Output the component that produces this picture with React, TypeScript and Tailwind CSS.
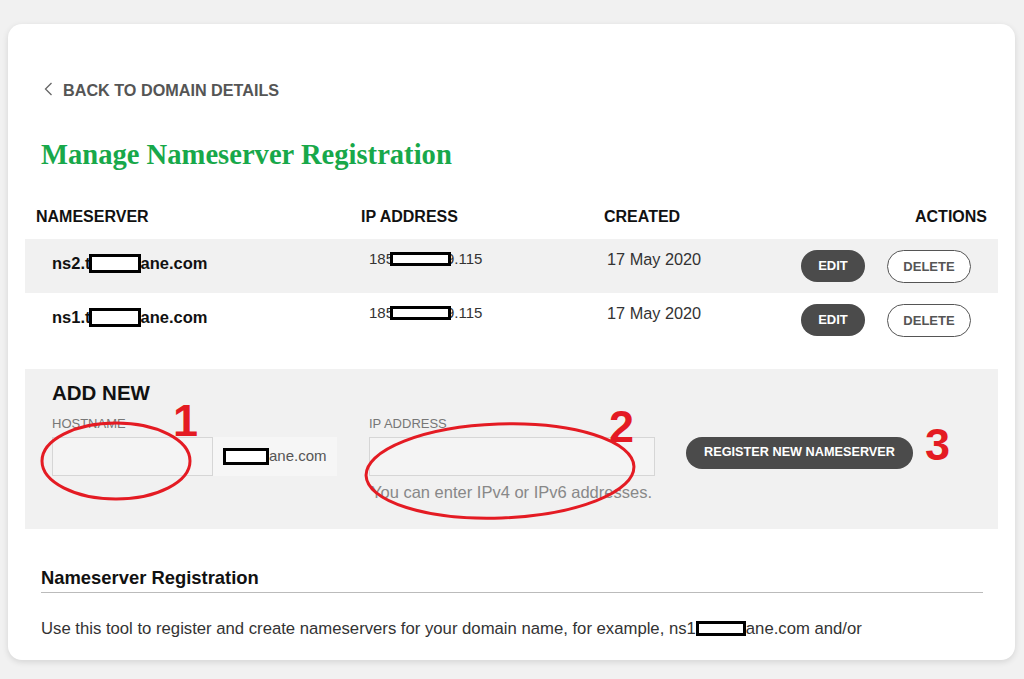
import React from "react";

const Redact = ({ w, h, cls = "" }: { w: number; h: number; cls?: string }) => (
  <span
    className={`relative z-10 inline-block border-[3px] border-black bg-white align-middle ${cls}`}
    style={{ width: w, height: h }}
  />
);

function Row({ ns, shaded }: { ns: string; shaded: boolean }) {
  return (
    <div className={`flex h-[54px] pl-[27px] pr-[27px] ${shaded ? "bg-[#f1f1f1]" : "bg-white"}`}>
      <div className="w-[317px] pt-[14px] text-[16.5px] leading-[20px] font-bold text-[#111]">
        {ns}
        <Redact w={52} h={19} cls="-ml-[2px] -mt-[2px]" />
        ane.com
      </div>
      <div className="w-[238px] pt-[10px] text-[15px] leading-[20px] text-[#333]">
        <span className="-mr-[4px]">185</span>
        <Redact w={61} h={14} cls="-mt-[3px]" />
        <span className="-ml-[5px]">9.115</span>
      </div>
      <div className="flex-1 pt-[10px] text-[16.3px] leading-[20px] text-[#333]">17 May 2020</div>
      <div className="flex gap-[22px] pt-[11px]">
        <button className="h-[32px] w-[64px] rounded-full bg-[#4b4b4b] text-[13px] font-bold text-white">EDIT</button>
        <button className="h-[33px] w-[84px] rounded-full border border-[#555] bg-white text-[13px] font-bold text-[#555]">
          DELETE
        </button>
      </div>
    </div>
  );
}

export default function App() {
  return (
    <div
      className="relative min-h-screen bg-[#f1f1f1] pl-2 pt-6"
      style={{ fontFamily: '"Liberation Sans", Arial, sans-serif' }}
    >
      <div className="h-[636px] w-[1007px] overflow-hidden rounded-[14px] bg-white px-[17px] pt-[56px] shadow-[0_2px_6px_rgba(0,0,0,0.12)]">
        {/* back link */}
        <div className="ml-[19px] flex h-[20px] items-center gap-[10px] text-[16.2px] font-bold leading-[20px] text-[#555]">
          <svg width="9" height="14" viewBox="0 0 9 14" className="-mt-[2px]">
            <polyline points="7.5,1 1.5,7 7.5,13" fill="none" stroke="#666" strokeWidth="1.3" />
          </svg>
          <span>BACK TO DOMAIN DETAILS</span>
        </div>

        {/* title */}
        <h1
          className="ml-[16px] mt-[38px] text-[28.6px] font-bold leading-[34px] text-[#18a84a]"
          style={{ fontFamily: '"Liberation Serif", "Times New Roman", serif' }}
        >
          Manage Nameserver Registration
        </h1>

        {/* header */}
        <div className="mt-[35px] flex pl-[11px] pr-[11px] text-[16px] font-bold leading-[20px] text-[#111]">
          <div className="w-[325px]">NAMESERVER</div>
          <div className="w-[243px]">IP ADDRESS</div>
          <div className="flex-1">CREATED</div>
          <div>ACTIONS</div>
        </div>

        <div className="mt-[12px]">
          <Row ns="ns2.t" shaded />
          <Row ns="ns1.t" shaded={false} />
        </div>

        {/* add new */}
        <div className="mt-[22px] h-[160px] bg-[#f1f1f1] pl-[27px] pt-[12px]">
          <div className="text-[20.5px] font-bold leading-[24px] text-[#111]">ADD NEW</div>
          <div className="mt-[11px] flex">
            <div className="w-[317px]">
              <div className="text-[13px] leading-[16px] text-[#777]">HOSTNAME</div>
              <div className="mt-[5px] flex">
                <div className="h-[39px] w-[161px] border border-[#d6d6d6] bg-[#f4f4f4]" />
                <div className="flex h-[39px] w-[124px] items-center bg-[#f6f6f6] pl-[10px] text-[15px] text-[#555]">
                  <Redact w={46} h={17} cls="" />
                  <span>ane.com</span>
                </div>
              </div>
            </div>
            <div className="w-[317px]">
              <div className="text-[13px] leading-[16px] text-[#777]">IP ADDRESS</div>
              <div className="mt-[5px] h-[39px] w-[286px] border border-[#d6d6d6] bg-[#f4f4f4]" />
              <div className="mt-[6px] pl-[2px] text-[16.5px] leading-[20px] text-[#888]">
                You can enter IPv4 or IPv6 addresses.
              </div>
            </div>
            <div className="pt-[21px]">
              <button className="h-[32px] w-[227px] rounded-full bg-[#4b4b4b] text-[12.7px] font-bold text-white">
                REGISTER NEW NAMESERVER
              </button>
            </div>
          </div>
        </div>

        {/* bottom info */}
        <div className="ml-[16px] mr-[15px] mt-[39px] border-b border-[#bbb] pb-[4px] text-[18.4px] font-bold leading-[20px] text-[#111]">
          Nameserver Registration
        </div>
        <p className="ml-[16px] mt-[26px] text-[16.7px] leading-[20px] text-[#333]">
          Use this tool to register and create nameservers for your domain name, for example, ns1
          <Redact w={50} h={15} cls="-mt-[2px]" />
          ane.com and/or
        </p>
      </div>

      {/* red annotations */}
      <svg className="pointer-events-none absolute left-0 top-0" width="1024" height="679">
        <ellipse cx="116" cy="461" rx="74" ry="38" fill="none" stroke="#e41b23" strokeWidth="3" />
        <ellipse cx="500" cy="471" rx="134" ry="47" fill="none" stroke="#e41b23" strokeWidth="3" transform="rotate(-2 500 471)" />
      </svg>
      <span className="pointer-events-none absolute left-[173px] top-[398px] text-[45px] font-bold leading-[45px] text-[#e41b23]">1</span>
      <span className="pointer-events-none absolute left-[609px] top-[404px] text-[45px] font-bold leading-[45px] text-[#e41b23]">2</span>
      <span className="pointer-events-none absolute left-[925px] top-[422px] text-[45px] font-bold leading-[45px] text-[#e41b23]">3</span>
    </div>
  );
}
